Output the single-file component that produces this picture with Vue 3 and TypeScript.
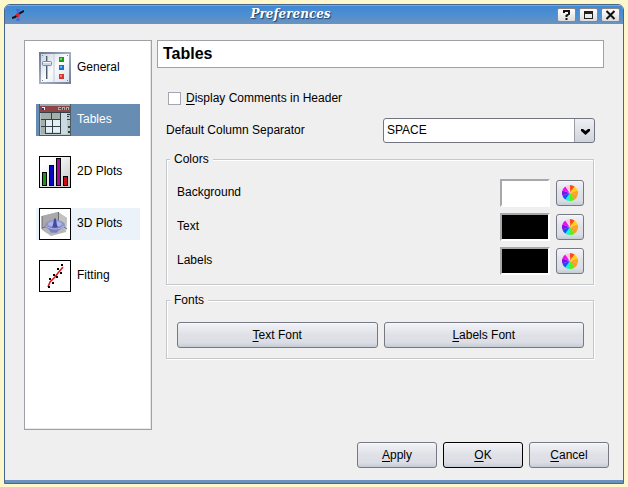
<script setup lang="ts">
import { reactive, ref } from 'vue'

type IconName = 'general' | 'tables' | 'plots2d' | 'plots3d' | 'fitting'

interface Page {
  id: IconName
  label: string
}

interface ColorRow {
  id: string
  label: string
  value: string
}

const pages: Page[] = [
  { id: 'general', label: 'General' },
  { id: 'tables', label: 'Tables' },
  { id: 'plots2d', label: '2D Plots' },
  { id: 'plots3d', label: '3D Plots' },
  { id: 'fitting', label: 'Fitting' },
]

const current = ref<IconName>('tables')
const hovered = ref<IconName>('plots3d')
const showComments = ref(false)
const separator = ref('SPACE')
const separators = ['SPACE', 'TAB', ';', ',']

const colors = reactive<ColorRow[]>([
  { id: 'background', label: 'Background', value: '#ffffff' },
  { id: 'text', label: 'Text', value: '#000000' },
  { id: 'labels', label: 'Labels', value: '#000000' },
])

const wheelColors = ['#ff4a12', '#ffd21a', '#ffa51e', '#ff9c20', '#58f01c', '#1cf0e0', '#1450f8', '#7a12f0', '#f40cf0', '#ffc4e8']

function wedge(i: number): string {
  const step = (Math.PI * 2) / wheelColors.length
  const point = (a: number) => `${(8 + 8 * Math.sin(a)).toFixed(2)} ${(8 - 8 * Math.cos(a)).toFixed(2)}`
  return `M8 8L${point(i * step)}A8 8 0 0 1 ${point((i + 1) * step)}Z`
}

const scatter = [[9, 26], [10, 18], [13, 22], [14, 14], [17, 16], [18, 8], [21, 12], [22, 4]]
</script>

<template>
  <div class="desktop">
    <div class="window">
      <header class="titlebar">
        <svg class="app-icon" viewBox="0 0 12 12" aria-hidden="true">
          <path d="M4 1h4M6 1v10M4 11h4" stroke="#4a66d8" stroke-width="1.500" fill="none" />
          <path d="M0 9l3-1 5-4 4-2" stroke="#101018" stroke-width="2" fill="none" />
          <circle cx="6" cy="6" r="2" fill="#ee2020" />
        </svg>
        <h1 class="caption">Preferences</h1>
        <div class="window-buttons">
          <button type="button" class="wm" aria-label="Help">
            <svg viewBox="0 0 17 12"><path d="M6 4V2h5v3L8.500 6.500V8M8.500 9v2" fill="none" stroke="#111" stroke-width="2" /></svg>
          </button>
          <button type="button" class="wm" aria-label="Maximize">
            <svg viewBox="0 0 17 12"><path d="M4 2h9v8H4zM5 5v4h7V5z" fill="#222" fill-rule="evenodd" /></svg>
          </button>
          <button type="button" class="wm" aria-label="Close">
            <svg viewBox="0 0 17 12"><path d="M4.500 2l8 8M12.500 2l-8 8" fill="none" stroke="#111" stroke-width="2" /></svg>
          </button>
        </div>
      </header>

      <main class="body">
        <nav class="sidebar">
          <button
            v-for="p in pages"
            :key="p.id"
            type="button"
            class="page"
            :class="{ selected: p.id === current, hover: p.id === hovered }"
            @click="current = p.id"
          >
            <svg class="page-icon" viewBox="0 0 32 32" aria-hidden="true">
              <g v-if="p.id === 'general'">
                <defs>
                  <linearGradient id="panel" x1="0" y1="0" x2="1" y2="1">
                    <stop offset="0" stop-color="#c9d5e2" /><stop offset=".5" stop-color="#fafbfd" /><stop offset="1" stop-color="#dce4ee" />
                  </linearGradient>
                  <linearGradient id="rim" x1="0" y1="0" x2="1" y2="1">
                    <stop offset="0" stop-color="#68758f" /><stop offset=".5" stop-color="#a4b0c4" /><stop offset="1" stop-color="#707c96" />
                  </linearGradient>
                </defs>
                <rect width="32" height="32" fill="url(#rim)" />
                <rect x="2" y="2" width="28" height="28" fill="url(#panel)" />
                <path d="M15 2v28" stroke="#c4ccd7" />
                <path d="M3 3h1v1H3zM28 3h1v1h-1zM3 28h1v1H3zM28 28h1v1h-1z" fill="#7a8698" />
                <path d="M7 4h1v23H7z" fill="#4d5a6c" />
                <path d="M8 4h1v23H8z" fill="#a9b5c3" />
                <rect x="3.500" y="9.500" width="9" height="4" rx="1" fill="#cbd8e7" stroke="#7688a2" />
                <path d="M4 10.500h8" stroke="#f4f8fc" />
                <path d="M20 5h5v5h-5z" fill="#189c12" /><path d="M21 6h2v2h-2z" fill="#70e05c" />
                <path d="M20 13h5v5h-5z" fill="#1b73c8" /><path d="M21 14h2v2h-2z" fill="#64baf8" />
                <path d="M20 22h5v5h-5z" fill="#d73434" /><path d="M21 23h2v2h-2z" fill="#ff8278" />
              </g>
              <g v-else-if="p.id === 'tables'">
                <rect width="32" height="32" fill="#b9c6c8" />
                <path d="M0 0h32v2H0z" fill="#9ba9ae" />
                <path d="M1 2h30v6H1z" fill="#8f4546" />
                <path d="M3 3h3v3H3z" fill="#f1f3f4" /><path d="M3 4h2v2H3z" fill="#20388c" />
                <path d="M19 3h3v3h-3zM23 3h3v3h-3zM27 3h3v3h-3z" fill="#a9ada6" />
                <path d="M20 4h2v1h-2zM24 4h1v2h-1zM28 4h1v2h-1z" fill="#38454b" />
                <path d="M2 9h19v6H7v15H2z" fill="#a5afa9" />
                <path d="M7 15h14v14H7z" fill="#e5eef3" />
                <path d="M22 9h6v21H7v-2h15z" fill="#cbd9e1" />
                <path d="M1 8.500h30M2 15.500h20M2 22.500h20M7 29.500h15M12.500 9v6M21.500 9v21M6.500 16v14M13.500 15v15" fill="none" stroke="#334048" />
                <path d="M28 10h3v1h-3zM28 12h2v1h-2zM28 15h3v1h-3zM29 22h2v2h-2zM29 27h2v2h-2z" fill="#334048" />
                <path d="M.5 0v32M31.500 0v32M0 31.500h32" stroke="#4b5960" />
              </g>
              <g v-else-if="p.id === 'plots2d'">
                <defs>
                  <linearGradient id="sheet" x1="0" y1="0" x2="1" y2="1">
                    <stop offset=".2" stop-color="#fff" /><stop offset="1" stop-color="#c8c8c8" />
                  </linearGradient>
                </defs>
                <rect x=".5" y=".5" width="31" height="31" fill="url(#sheet)" stroke="#000" />
                <rect x="3.500" y="16.500" width="4" height="13" fill="#17951c" stroke="#000" />
                <rect x="10.500" y="9.500" width="4" height="20" fill="#0808c4" stroke="#000" />
                <rect x="17.500" y="2.500" width="4" height="27" fill="#a8089e" stroke="#000" />
                <rect x="24.500" y="20.500" width="4" height="9" fill="#c80e16" stroke="#000" />
              </g>
              <g v-else-if="p.id === 'plots3d'">
                <rect x=".5" y=".5" width="31" height="31" fill="#fff" stroke="#000" />
                <path d="M3 8l16-4 9 6-1 14-15 4-9-6z" fill="#b5b5b5" />
                <path d="M3 8l16-4v11L3 20z" fill="#a9a9a9" />
                <path d="M19 4l9 6-1 14-8-9z" fill="#c2c2c2" />
                <path d="M19.500 4v11M3 20l16-5 9 6M3 8v13" fill="none" stroke="#6c6c6c" />
                <ellipse cx="16" cy="17" rx="10" ry="5" fill="#8d93cd" />
                <path d="M6 17c2 4 5 4 6 8 2-2 5 2 7-2l7-6c-4 3-16 3-20 0z" fill="#777fc0" />
                <ellipse cx="16" cy="16" rx="7" ry="3" fill="#adb4e6" />
                <path d="M13 19c2-2 1-8 3-9 2 1 1 7 3 9-2 1-4 1-6 0z" fill="#444aa0" />
                <path d="M7 18c5 4 13 4 18 0" fill="none" stroke="#b7bce3" />
              </g>
              <g v-else>
                <rect x=".5" y=".5" width="31" height="31" fill="#fff" stroke="#000" />
                <path d="M9 27l2-5 5-5 3-4 5-6" fill="none" stroke="#e81010" stroke-width="1.500" />
                <path v-for="(s, i) in scatter" :key="i" :d="`M${s[0]} ${s[1]}h2v2h-2z`" fill="#000" />
              </g>
            </svg>
            <span class="page-label">{{ p.label }}</span>
          </button>
        </nav>

        <section class="panel">
          <h2 class="panel-title">Tables</h2>
          <div class="form">
            <label class="check">
              <input v-model="showComments" type="checkbox" />
              <span><u>D</u>isplay Comments in Header</span>
            </label>

            <div class="field">
              <label class="field-name" for="separator">Default Column Separator</label>
              <div class="combo">
                <select id="separator" v-model="separator">
                  <option v-for="s in separators" :key="s">{{ s }}</option>
                </select>
                <svg class="arrow" viewBox="0 0 9 7" aria-hidden="true">
                  <path d="M0 1h2l2.500 2L7 1h2v2L4.500 7 0 3z" fill="#000" />
                </svg>
              </div>
            </div>

            <fieldset class="group">
              <legend>Colors</legend>
              <div class="color-rows">
                <div v-for="c in colors" :key="c.id" class="color-row">
                  <span class="color-name">{{ c.label }}</span>
                  <span class="swatch" :style="{ backgroundColor: c.value }"></span>
                  <button type="button" class="btn pick" :aria-label="c.label">
                    <svg viewBox="0 0 16 16" aria-hidden="true">
                      <defs>
                        <radialGradient id="glow" cx=".5" cy=".4" r=".5">
                          <stop offset="0" stop-color="#fff" stop-opacity=".3" /><stop offset=".4" stop-color="#fff" stop-opacity="0" />
                        </radialGradient>
                      </defs>
                      <path v-for="(w, i) in wheelColors" :key="w" :d="wedge(i)" :fill="w" />
                      <circle cx="8" cy="8" r="8" fill="url(#glow)" />
                    </svg>
                  </button>
                </div>
              </div>
            </fieldset>

            <fieldset class="group fonts">
              <legend>Fonts</legend>
              <div class="font-row">
                <button type="button" class="btn"><span><u>T</u>ext Font</span></button>
                <button type="button" class="btn"><span><u>L</u>abels Font</span></button>
              </div>
            </fieldset>
          </div>
        </section>
      </main>

      <footer class="actions">
        <button type="button" class="btn"><span><u>A</u>pply</span></button>
        <button type="button" class="btn default"><span><u>O</u>K</span></button>
        <button type="button" class="btn"><span><u>C</u>ancel</span></button>
      </footer>
    </div>
  </div>
</template>

<style>
body {
  background: #fdf7cb;
}
</style>

<style scoped>
.desktop {
  box-sizing: border-box;
  display: flex;
  min-height: 100vh;
  padding: 4px 4px 3px;
  font-family: "Liberation Sans", Arial, sans-serif;
  font-size: 12px;
  line-height: 14px;
  color: #000;
}

.window {
  box-sizing: border-box;
  display: flex;
  flex: 1;
  flex-direction: column;
  border: 1px solid #45678d;
  border-radius: 6px 6px 0 0;
  background: #efefef;
  box-shadow: inset 0 -3px 0 #6b91bd;
}

.titlebar {
  display: flex;
  align-items: center;
  height: 19px;
  padding: 0 3px 0 7px;
  border-radius: 5px 5px 0 0;
  background: linear-gradient(#a9d0f3 0, #4189d3 1px, #4b8ed2 9px, #6c92bd 19px);
}

.app-icon {
  width: 12px;
  height: 12px;
}

.caption {
  flex: 1;
  margin: 0;
  padding-bottom: 1px;
  text-align: center;
  font: italic bold 12px/18px "DejaVu Serif", serif;
  color: #fff;
  text-shadow: 1px 1px 1px #1f3f66;
}

.window-buttons {
  display: flex;
  gap: 3px;
}

.wm {
  display: grid;
  place-items: center;
  width: 19px;
  height: 14px;
  padding: 0;
  border: 1px solid #8c8780;
  border-radius: 2px;
  background: linear-gradient(#fff, #dcdcdc);
}

.wm svg {
  width: 17px;
  height: 12px;
}

.body {
  display: flex;
  flex: 1;
  gap: 5px;
  padding: 16px 19px 0;
}

.sidebar {
  box-sizing: border-box;
  display: flex;
  flex-direction: column;
  gap: 20px;
  width: 128px;
  padding: 11px;
  border: 1px solid #a0a0a6;
  background: #fff;
  box-shadow: inset -1px -1px 0 #e9e9e9;
}

.page {
  display: flex;
  align-items: center;
  gap: 6px;
  height: 32px;
  padding: 0 3px;
  border: 0;
  background: #fff;
  font: inherit;
  color: #000;
}

.page.hover {
  background: #ebf2f9;
}

.page.selected {
  background: #688db3;
  color: #fff;
}

.page-icon {
  width: 32px;
  height: 32px;
}

.page-label {
  padding-bottom: 2px;
}

.panel {
  flex: 1;
}

.panel-title {
  box-sizing: border-box;
  height: 28px;
  margin: 0;
  padding: 0 5px;
  border: 1px solid #a0a0a6;
  background: #fff;
  font-size: 16px;
  line-height: 26px;
}

.form {
  display: flex;
  flex-direction: column;
  padding: 23px 10px 0 9px;
}

.check {
  display: flex;
  align-items: center;
  gap: 5px;
  padding-left: 2px;
}

.check input {
  appearance: none;
  box-sizing: border-box;
  width: 13px;
  height: 13px;
  margin: 0;
  border: 1px solid #a6a6b2;
  background: #fff;
}

.check input:checked {
  background: #688db3;
}

u {
  text-decoration: underline;
  text-decoration-skip-ink: none;
  text-underline-offset: 2px;
}

.field {
  display: flex;
  align-items: center;
  justify-content: space-between;
  margin: 13px -1px 9px 0;
}

.field-name,
.color-name {
  padding-bottom: 2px;
}

.combo {
  display: grid;
  width: 212px;
}

.combo select,
.arrow {
  grid-area: 1 / 1;
}

.combo select {
  appearance: none;
  box-sizing: border-box;
  height: 25px;
  padding: 0 24px 2px 3px;
  border: 1px solid #72757f;
  border-radius: 3px;
  background: linear-gradient(#9a9da6, #9a9da6) right 19px top / 1px 100% no-repeat, linear-gradient(#eef0f4, #cfd3db) right / 19px 100% no-repeat, #fff;
  font: inherit;
  color: #000;
}

.arrow {
  place-self: center end;
  width: 9px;
  height: 7px;
  margin: 2px 5px 0 0;
  pointer-events: none;
}

.group {
  min-width: 0;
  margin: 0 0 8px;
  padding: 13px 9px 9px 10px;
  border: 1px solid #c6c7cb;
  box-shadow: 1px 1px 0 #fff, inset 1px 1px 0 #fff;
}

.group.fonts {
  padding-top: 15px;
  padding-bottom: 10px;
}

.group legend {
  margin-left: -7px;
  padding: 0 4px;
  background: #efefef;
}

.color-rows {
  display: grid;
  gap: 6px;
}

.color-row {
  display: flex;
  align-items: center;
  gap: 6px;
}

.color-name {
  flex: 1;
}

.swatch {
  box-sizing: border-box;
  width: 50px;
  height: 28px;
  border: 2px solid;
  border-color: #a8a8ac #fff #fff #a8a8ac;
}

.btn {
  box-sizing: border-box;
  height: 26px;
  padding: 0;
  border: 1px solid #767983;
  border-radius: 3px;
  background: linear-gradient(#f2f3f8, #e0e1e7 50%, #dcdee5 80%, #c6ccd4);
  box-shadow: inset 0 1px 0 #f7f8fc;
  font: inherit;
  color: #000;
}

.btn.default {
  border-color: #000;
}

.pick {
  display: grid;
  place-items: center;
  width: 28px;
}

.pick svg {
  width: 16px;
  height: 16px;
}

.font-row {
  display: grid;
  grid-template-columns: 1fr 1fr;
  gap: 6px;
}

.actions {
  display: flex;
  justify-content: flex-end;
  gap: 6px;
  padding: 12px 14px 15px;
}

.actions .btn {
  width: 80px;
}
</style>
